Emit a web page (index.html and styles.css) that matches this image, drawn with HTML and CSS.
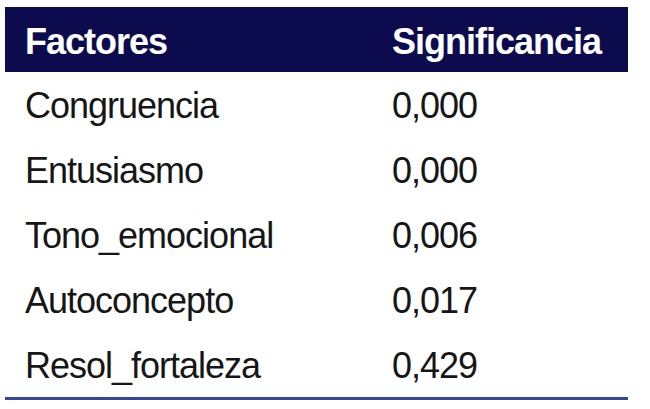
FILE: index.html
```html
<!DOCTYPE html>
<html lang="es">
<head>
<meta charset="utf-8">
<title>Factores</title>
<link rel="stylesheet" href="styles.css">
</head>
<body>
<div class="table">
  <div class="row head">
    <div class="cell">Factores</div>
    <div class="cell">Significancia</div>
  </div>
  <div class="row">
    <div class="cell">Congruencia</div>
    <div class="cell">0,000</div>
  </div>
  <div class="row">
    <div class="cell">Entusiasmo</div>
    <div class="cell">0,000</div>
  </div>
  <div class="row">
    <div class="cell">Tono_emocional</div>
    <div class="cell">0,006</div>
  </div>
  <div class="row">
    <div class="cell">Autoconcepto</div>
    <div class="cell">0,017</div>
  </div>
  <div class="row">
    <div class="cell">Resol_fortaleza</div>
    <div class="cell">0,429</div>
  </div>
</div>
</body>
</html>
```
FILE: styles.css
```css
html, body {
  margin: 0;
  padding: 0;
  background: #ffffff;
}
body {
  padding: 7px 0 0 5px;
  font-family: "Liberation Sans", Arial, sans-serif;
  font-size: 36px;
  letter-spacing: -1px;
  color: #161616;
}
.table {
  width: 623px;
  border-bottom: 3px solid #3445a0;
}
.row {
  display: grid;
  grid-template-columns: 367px 1fr;
  height: 65px;
  box-sizing: border-box;
  padding-top: 3px;
  line-height: 62px;
}
.cell {
  padding-left: 20px;
  white-space: nowrap;
}
.head {
  background: #0c0b4e;
  color: #ffffff;
  font-weight: bold;
  padding-top: 5px;
  line-height: 60px;
}
```
